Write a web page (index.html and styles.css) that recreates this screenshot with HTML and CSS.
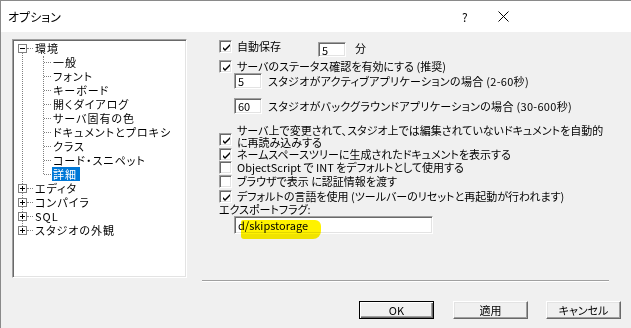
FILE: index.html
```html
<!DOCTYPE html>
<html lang="ja">
<head>
<meta charset="utf-8">
<title>オプション</title>
<link rel="stylesheet" href="styles.css">
</head>
<body>
<div class="window">
  <div class="titlebar">
    <span class="title">オプション</span>
    <span class="tb-help">?</span>
    <span class="tb-close"><svg width="11" height="11" viewBox="0 0 11 11"><path d="M0.5 0.5 L10.5 10.5 M10.5 0.5 L0.5 10.5" stroke="#000" stroke-width="1" fill="none"/></svg></span>
  </div>
  <div class="main">
    <div class="tree">
      <div class="guide g-root"></div>
      <div class="guide g-child"></div>
      <div class="node root"><span class="exp"><span class="h"></span></span><span class="hdots"></span><span class="lbl">環境</span></div>
      <div class="node child"><span class="hdots"></span><span class="lbl">一般</span></div>
      <div class="node child"><span class="hdots"></span><span class="lbl">フォント</span></div>
      <div class="node child"><span class="hdots"></span><span class="lbl">キーボード</span></div>
      <div class="node child"><span class="hdots"></span><span class="lbl">開くダイアログ</span></div>
      <div class="node child"><span class="hdots"></span><span class="lbl">サーバ固有の色</span></div>
      <div class="node child"><span class="hdots"></span><span class="lbl">ドキュメントとプロキシ</span></div>
      <div class="node child"><span class="hdots"></span><span class="lbl">クラス</span></div>
      <div class="node child"><span class="hdots"></span><span class="lbl">コード・スニペット</span></div>
      <div class="node child"><span class="hdots"></span><span class="lbl sel">詳細</span></div>
      <div class="node root"><span class="exp"><span class="h"></span><span class="v"></span></span><span class="hdots"></span><span class="lbl">エディタ</span></div>
      <div class="node root"><span class="exp"><span class="h"></span><span class="v"></span></span><span class="hdots"></span><span class="lbl">コンパイラ</span></div>
      <div class="node root"><span class="exp"><span class="h"></span><span class="v"></span></span><span class="hdots"></span><span class="lbl">SQL</span></div>
      <div class="node root"><span class="exp"><span class="h"></span><span class="v"></span></span><span class="hdots"></span><span class="lbl">スタジオの外観</span></div>
    </div>
    <div class="page">
      <div class="row r1">
        <span class="cb on"><svg width="9" height="9" viewBox="0 0 9 9"><path d="M1 4 L3 6 L8 1 L8 3 L3 8 L1 6 Z" fill="#000"/></svg></span>
        <span class="lbl w-auto">自動保存</span>
        <span class="field f-small">5</span>
        <span class="unit">分</span>
      </div>
      <div class="row r2">
        <span class="cb on"><svg width="9" height="9" viewBox="0 0 9 9"><path d="M1 4 L3 6 L8 1 L8 3 L3 8 L1 6 Z" fill="#000"/></svg></span>
        <span class="lbl">サーバのステータス確認を有効にする (推奨)</span>
      </div>
      <div class="row r3 sub">
        <span class="field f-small">5</span>
        <span class="lbl2">スタジオがアクティブアプリケーションの場合 (2-60秒)</span>
      </div>
      <div class="row r4 sub">
        <span class="field f-small">60</span>
        <span class="lbl2">スタジオがバックグラウンドアプリケーションの場合 (30-600秒)</span>
      </div>
      <div class="row r5">
        <span class="cb on"><svg width="9" height="9" viewBox="0 0 9 9"><path d="M1 4 L3 6 L8 1 L8 3 L3 8 L1 6 Z" fill="#000"/></svg></span>
        <span class="lbl multi">サーバ上で変更されて、スタジオ上では編集されていないドキュメントを自動的<br>に再読み込みする</span>
      </div>
      <div class="row r6">
        <span class="cb on"><svg width="9" height="9" viewBox="0 0 9 9"><path d="M1 4 L3 6 L8 1 L8 3 L3 8 L1 6 Z" fill="#000"/></svg></span>
        <span class="lbl">ネームスペースツリーに生成されたドキュメントを表示する</span>
      </div>
      <div class="row r7">
        <span class="cb"></span>
        <span class="lbl">ObjectScript で INT をデフォルトとして使用する</span>
      </div>
      <div class="row r8">
        <span class="cb"></span>
        <span class="lbl">ブラウザで表示 に認証情報を渡す</span>
      </div>
      <div class="row r9">
        <span class="cb on"><svg width="9" height="9" viewBox="0 0 9 9"><path d="M1 4 L3 6 L8 1 L8 3 L3 8 L1 6 Z" fill="#000"/></svg></span>
        <span class="lbl">デフォルトの言語を使用 (ツールバーのリセットと再起動が行われます)</span>
      </div>
      <div class="row r10">
        <span class="plain">エクスポートフラグ:</span>
      </div>
      <div class="row r11">
        <span class="field f-wide">d/skipstorage<span class="marker"></span></span>
      </div>
    </div>
  </div>
  <div class="footer">
    <span class="btn default">OK</span>
    <span class="btn">適用</span>
    <span class="btn">キャンセル</span>
  </div>
</div>
</body>
</html>
```

FILE: styles.css
```css
html, body {
  margin: 0;
  padding: 0;
  background: #f0f0f0;
}

body {
  font-family: "Noto Sans CJK JP", "Liberation Sans", sans-serif;
  font-size: 11px;
  font-feature-settings: "palt";
  color: #000;
}

.window {
  width: 630px;
  height: 327px;
  border-top: 1px solid #8a8a8a;
  border-left: 1px solid #8a8a8a;
  background: #f0f0f0;
  display: flex;
  flex-direction: column;
}

.titlebar {
  height: 31px;
  background: #fff;
  display: flex;
  align-items: center;
  padding-left: 7px;
}

.title {
  font-size: 12px;
  flex: 1;
}

.tb-help {
  font-size: 12px;
  width: 12px;
  margin-right: 24px;
}

.tb-close {
  display: flex;
  align-items: center;
  width: 11px;
  margin-right: 122px;
}

.main {
  display: flex;
  align-items: flex-start;
  padding-top: 7px;
  padding-left: 11px;
}

/* Tree */
.tree {
  position: relative;
  width: 173px;
  background: #fff;
  border: 1px solid;
  border-color: #a0a0a0 #fff #fff #a0a0a0;
  box-shadow: inset 1px 1px 0 #696969, inset -1px -1px 0 #e3e3e3;
  padding-top: 1px;
  box-sizing: content-box;
  height: 236px;
}

.guide {
  position: absolute;
  border-left: 1px dotted #808080;
}

.g-root {
  left: 9px;
  top: 13px;
  height: 177px;
}

.g-child {
  left: 30px;
  top: 16px;
  height: 118px;
}

.node {
  height: 14px;
  display: flex;
  align-items: center;
  white-space: nowrap;
}

.node.root {
  padding-left: 5px;
}

.node.child {
  padding-left: 31px;
}

.exp {
  position: relative;
  z-index: 1;
  width: 7px;
  height: 7px;
  border: 1px solid #808080;
  background: #fff;
  display: flex;
  align-items: center;
  justify-content: center;
}

.exp .h {
  position: absolute;
  left: 1px;
  top: 3px;
  width: 5px;
  height: 1px;
  background: #000;
}

.exp .v {
  position: absolute;
  left: 3px;
  top: 1px;
  width: 1px;
  height: 5px;
  background: #000;
}

.hdots {
  width: 6px;
  height: 0;
  border-top: 1px dotted #808080;
}

.child .hdots {
  width: 7px;
}

.node .lbl {
  margin-left: 2px;
  line-height: 14px;
  letter-spacing: 1px;
}

.node .lbl.sel {
  margin-left: 1px;
  padding: 0 3px 0 1px;
  background: #0078d7;
  color: #fff;
}

/* Page */
.page {
  margin-left: 15px;
  margin-top: -7px;
  width: 407px;
  border-bottom: 1px solid #a0a0a0;
  box-shadow: 0 1px 0 #fff;
  padding-left: 17px;
  padding-top: 8px;
  box-sizing: border-box;
  height: 249px;
}

.row {
  display: flex;
  align-items: center;
  white-space: nowrap;
}

.cb {
  width: 11px;
  height: 11px;
  flex: none;
  background: #fff;
  border: 1px solid;
  border-color: #a0a0a0 #fff #fff #a0a0a0;
  box-shadow: inset 1px 1px 0 #696969, inset -1px -1px 0 #e3e3e3;
  display: flex;
  align-items: center;
  justify-content: center;
}

.cb svg {
  margin-left: 1px;
  margin-top: 1px;
}

.row .lbl {
  margin-left: 5px;
  line-height: 13px;
}

.field {
  position: relative;
  background: #fff;
  border: 1px solid;
  border-color: #a0a0a0 #fff #fff #a0a0a0;
  box-shadow: inset 1px 1px 0 #696969, inset -1px -1px 0 #e3e3e3;
  box-sizing: border-box;
  padding-left: 3px;
  display: flex;
  align-items: center;
}

.f-small {
  width: 28px;
  height: 16px;
}

.r1 {
  height: 17px;
  align-items: flex-start;
}

.r1 .lbl.w-auto {
  width: 81px;
  margin-left: 5px;
}

.r1 .field {
  margin-top: 2px;
  height: 15px;
}

.r1 .unit {
  margin-left: 9px;
  line-height: 17px;
}

.r2 {
  margin-top: 3px;
  height: 13px;
}

.sub {
  padding-left: 15px;
  height: 16px;
}

.r3 {
  margin-top: 0;
}

.r4 {
  margin-top: 9px;
}

.lbl2 {
  margin-left: 6px;
  letter-spacing: 0.3px;
}

.r5 {
  margin-top: 10px;
  align-items: flex-start;
}

.r5 .cb {
  margin-top: 9px;
}

.r5 .lbl.multi {
  line-height: 12px;
}

.r6 {
  height: 13px;
}

.r7 {
  height: 13px;
}

.r8 {
  margin-top: 1px;
  height: 13px;
}

.r9 {
  margin-top: 2px;
  height: 13px;
}

.r10 {
  height: 12px;
  margin-top: 0;
}

.plain {
  line-height: 12px;
}

.r11 {
  margin-top: 1px;
  padding-left: 15px;
}

.f-wide {
  width: 199px;
  height: 18px;
}

.marker {
  position: absolute;
  left: 6px;
  top: 3px;
  width: 80px;
  height: 19px;
  background: #fff200;
  mix-blend-mode: multiply;
  border-radius: 2px 6px 8px 3px;
}

/* Footer buttons */
.footer {
  display: flex;
  justify-content: flex-end;
  padding-top: 20px;
  padding-right: 10px;
  gap: 18px;
}

.btn {
  width: 75px;
  height: 18px;
  box-sizing: border-box;
  display: flex;
  align-items: center;
  justify-content: center;
  background: #f0f0f0;
  border: 1px solid;
  border-color: #fff #696969 #696969 #fff;
  box-shadow: inset -1px -1px 0 #a0a0a0, inset 1px 1px 0 #e3e3e3;
  line-height: 1;
}

.btn.default {
  border: 1px solid #000;
  box-shadow: inset 1px 1px 0 #fff, inset -1px -1px 0 #696969, inset -2px -2px 0 #a0a0a0;
  margin-right: 1px;
}
```
